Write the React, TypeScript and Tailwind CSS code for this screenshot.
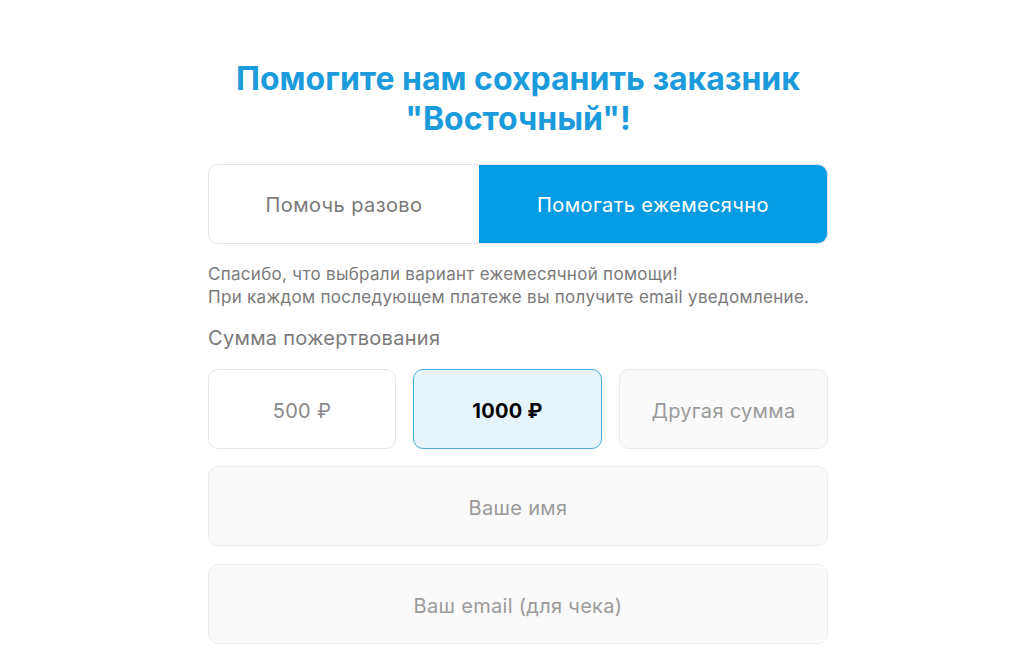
import { useState } from "react";

const amounts = ["500 ₽", "1000 ₽"];

export default function App() {
  const [mode, setMode] = useState<"once" | "monthly">("monthly");
  const [amount, setAmount] = useState("1000 ₽");

  return (
    <div
      className="min-h-[652px] bg-white flex justify-center pl-[12px]"
      style={{ fontFamily: "Inter, 'Noto Sans', sans-serif" }}
    >
      <div className="w-[620px] pt-[59px]">
        <h1 className="text-center text-[32px] leading-[40px] font-bold text-[#1b9bdb]">
          Помогите нам сохранить заказник
          <br />
          "Восточный"!
        </h1>

        <div className="mt-[25px] flex h-[80px] rounded-[10px] border border-[#e6e6e6] overflow-hidden">
          <button
            onClick={() => setMode("once")}
            className={`w-[270px] pt-[2px] text-[20px] tracking-[0.4px] ${
              mode === "once" ? "bg-[#069ce3] text-white" : "bg-white text-[#7a7a7a]"
            }`}
          >
            Помочь разово
          </button>
          <button
            onClick={() => setMode("monthly")}
            className={`flex-1 pt-[2px] text-[20px] tracking-[0.4px] ${
              mode === "monthly" ? "bg-[#069ce3] text-white" : "bg-white text-[#7a7a7a]"
            }`}
          >
            Помогать ежемесячно
          </button>
        </div>

        <p className="mt-[19px] text-[17px] leading-[23px] text-[#7a7a7a] tracking-[0.3px]">
          Спасибо, что выбрали вариант ежемесячной помощи!
          <br />
          При каждом последующем платеже вы получите email уведомление.
        </p>

        <p className="mt-[15px] text-[20px] leading-[28px] text-[#7a7a7a] tracking-[0.3px]">
          Сумма пожертвования
        </p>

        <div className="mt-[17px] grid grid-cols-[188px_189px_1fr] gap-[17px]">
          {amounts.map((a) => (
            <button
              key={a}
              onClick={() => setAmount(a)}
              className={`h-[80px] pt-[3px] rounded-[10px] border text-[20px] tracking-[0.3px] ${
                amount === a
                  ? "bg-[#e6f5fc] border-[#48acd9] text-black font-bold"
                  : "bg-white border-[#e6e6e6] text-[#8a8a8a]"
              }`}
            >
              {a}
            </button>
          ))}
          <input
            placeholder="Другая сумма"
            className="h-[80px] pt-[3px] w-full rounded-[10px] border border-[#ebebeb] bg-[#fafafa] text-center text-[20px] tracking-[0.3px] outline-none placeholder:text-[#9a9a9a]"
          />
        </div>

        <input
          placeholder="Ваше имя"
          className="mt-[17px] pt-[3px] block h-[80px] w-full rounded-[10px] border border-[#ededed] bg-[#fafafa] text-center text-[20px] tracking-[0.3px] outline-none placeholder:text-[#9a9a9a]"
        />
        <input
          placeholder="Ваш email (для чека)"
          className="mt-[18px] pt-[3px] block h-[80px] w-full rounded-[10px] border border-[#ededed] bg-[#fafafa] text-center text-[20px] tracking-[0.3px] outline-none placeholder:text-[#9a9a9a]"
        />
      </div>
    </div>
  );
}
